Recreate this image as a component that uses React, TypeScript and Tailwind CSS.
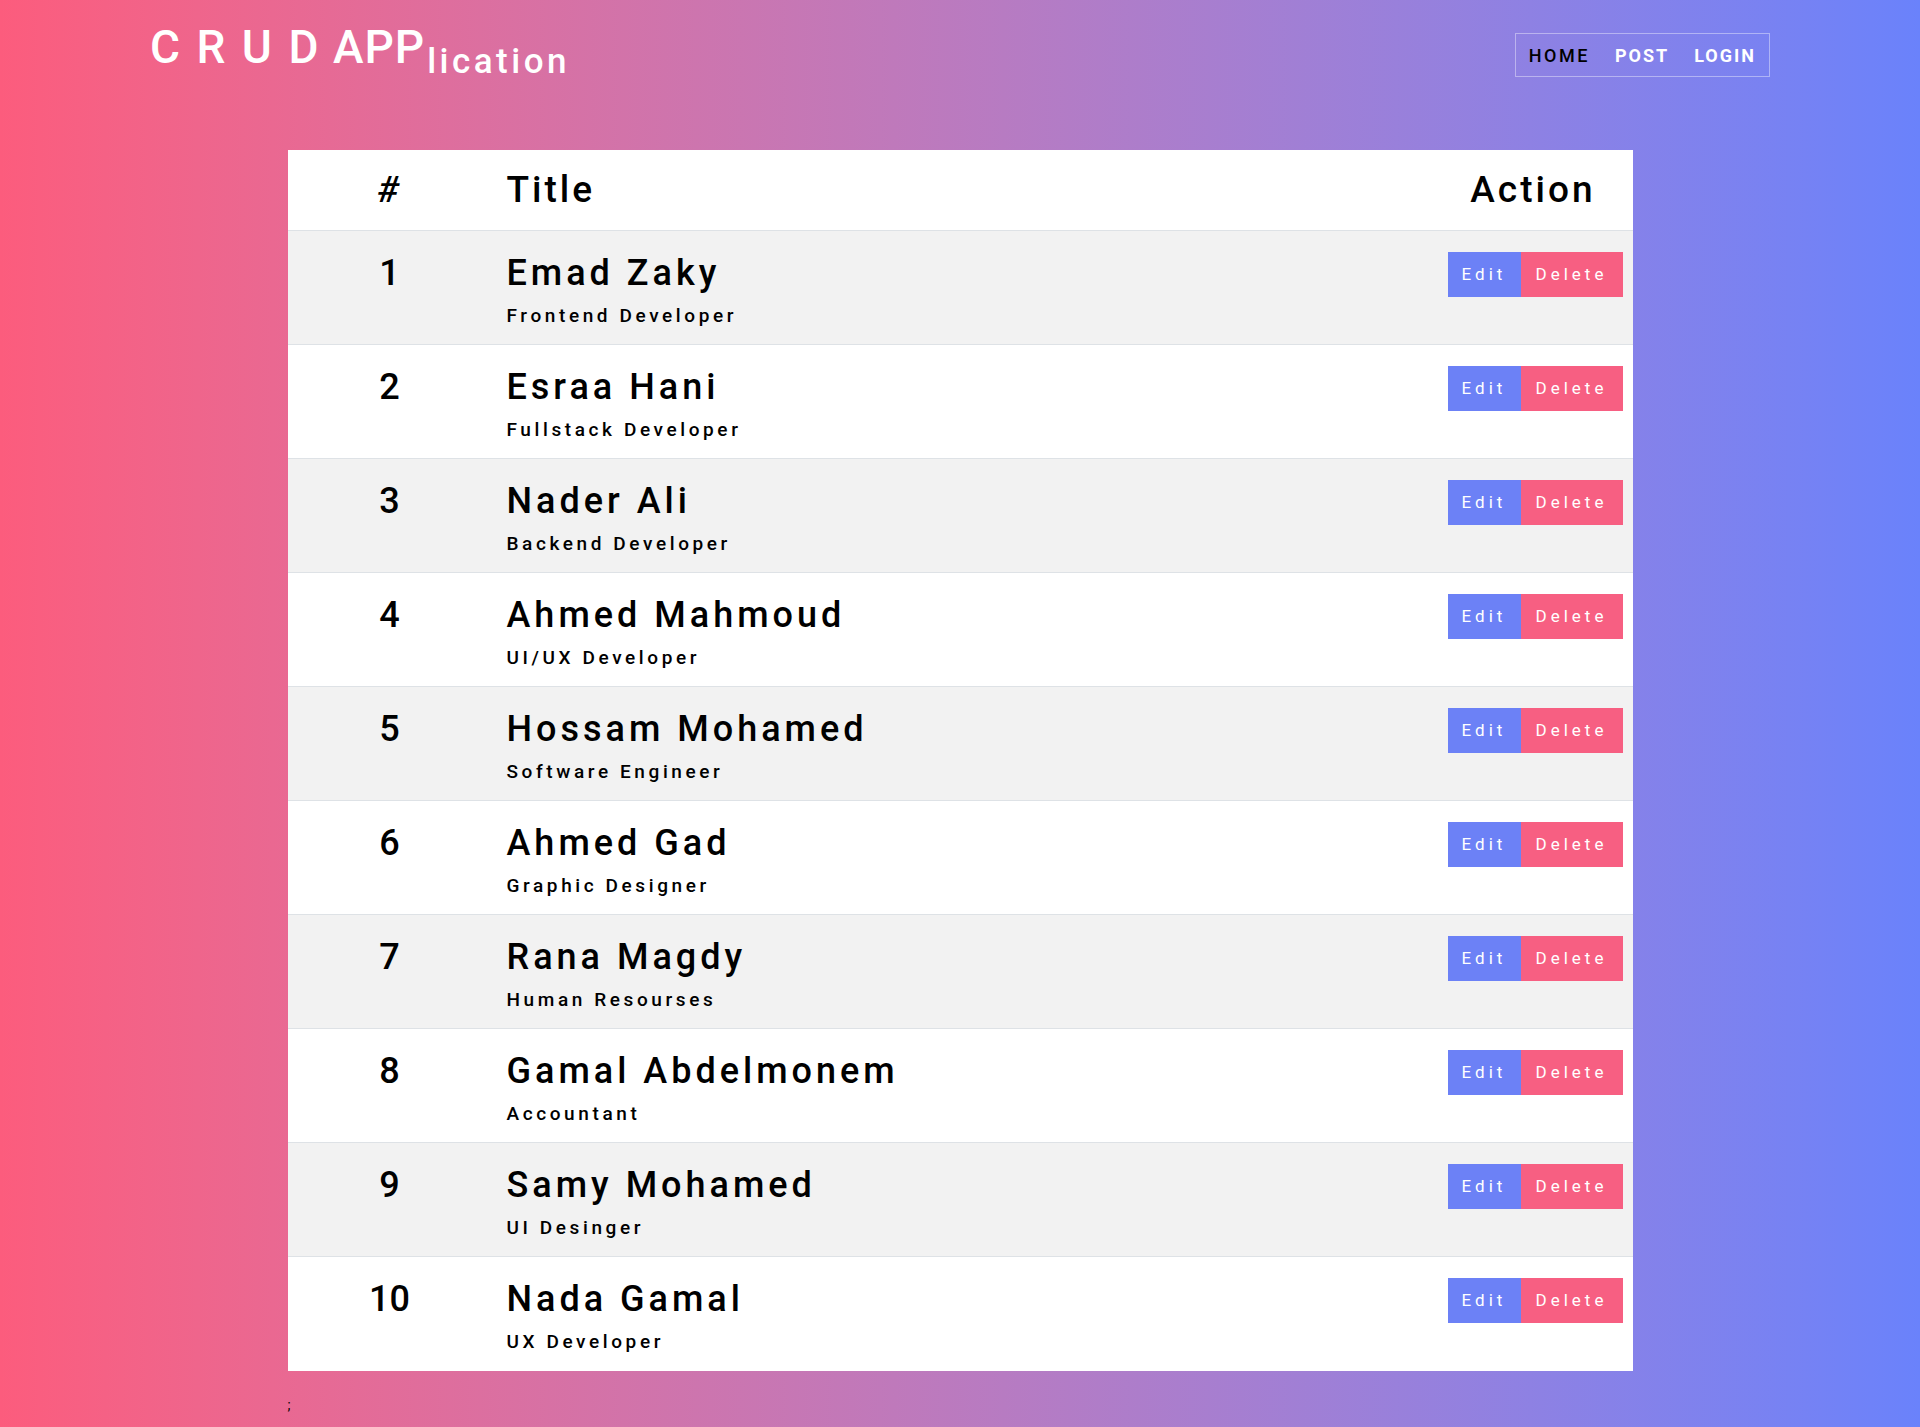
import React from "react";

const rows = [
  ["Emad Zaky", "Frontend Developer"],
  ["Esraa Hani", "Fullstack Developer"],
  ["Nader Ali", "Backend Developer"],
  ["Ahmed Mahmoud", "UI/UX Developer"],
  ["Hossam Mohamed", "Software Engineer"],
  ["Ahmed Gad", "Graphic Designer"],
  ["Rana Magdy", "Human Resourses"],
  ["Gamal Abdelmonem", "Accountant"],
  ["Samy Mohamed", "UI Desinger"],
  ["Nada Gamal", "UX Developer"],
];

export default function App() {
  return (
    <div
      className="min-h-[1427px] w-full bg-gradient-to-r from-[#fc5c7d] to-[#6a82fb] text-black"
      style={{ fontFamily: "Roboto, 'Liberation Sans', sans-serif" }}
    >
      <header className="mx-auto flex w-[1620px] items-start justify-between pt-[24px] h-[150px]">
        <h1 className="flex items-baseline text-white font-medium leading-none">
          <span className="text-[46px] tracking-[2.5px]">C R U D</span>
          <span className="ml-[12px] text-[46px] tracking-[1px]">APP</span>
          <span className="ml-[2px] text-[35px] tracking-[3.5px] translate-y-[10px]">lication</span>
        </h1>
        <nav className="mt-[9px] flex h-[44px] items-center gap-[25px] border border-white/40 pl-[13px] pr-[13px] text-[18px] font-bold">
          <span className="tracking-[2.5px] font-medium text-black">HOME</span>
          <span className="tracking-[2px] text-white">POST</span>
          <span className="tracking-[2px] text-white">LOGIN</span>
        </nav>
      </header>

      <div className="mx-auto w-[1345px] bg-white">
        <div className="flex h-[81px] items-center border-b border-[#dee2e6] text-[37px] font-medium tracking-[3px]">
          <div className="w-[204px] text-center italic">#</div>
          <div className="flex-1 pl-[15px]">Title</div>
          <div className="pr-[37px]">Action</div>
        </div>
        {rows.map(([name, role], i) => (
          <div
            key={i}
            className={`flex h-[114px] border-b border-[#dee2e6] last:border-b-0 ${i % 2 === 0 ? "bg-[#f2f2f2]" : "bg-white"}`}
          >
            <div className="w-[204px] pt-[18px] text-center text-[36px] font-medium leading-[48px]">{i + 1}</div>
            <div className="flex-1 pl-[15px] pt-[18px]">
              <div className="text-[36px] font-medium leading-[48px] tracking-[4px]">{name}</div>
              <div className="mt-[7px] text-[19px] font-medium leading-[24px] tracking-[3.6px]">{role}</div>
            </div>
            <div className="flex pr-[10px] pt-[21px]">
              <button className="h-[45px] w-[73px] bg-[#6c81f6] text-[17px] tracking-[4px] text-white">Edit</button>
              <button className="h-[45px] w-[102px] bg-[#f75f82] text-[17px] tracking-[4px] text-white">Delete</button>
            </div>
          </div>
        ))}
      </div>
      <div className="mx-auto w-[1345px] pt-[24px] text-[14px] leading-[20px]">;</div>
    </div>
  );
}
